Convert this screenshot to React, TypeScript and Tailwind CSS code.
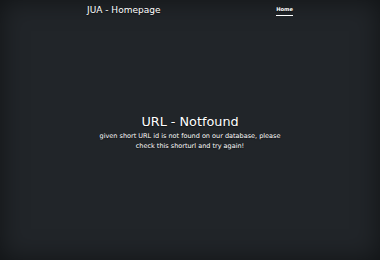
export default function App() {
  return (
    <div
      className="h-screen w-full bg-[#212529] text-white text-center shadow-[inset_0_0_26px_rgba(0,0,0,0.5)] [text-shadow:0_0.5px_1px_rgba(0,0,0,0.5)]"
      style={{ fontFamily: '"DejaVu Sans", sans-serif' }}
    >
      <div className="mx-auto flex h-full w-full max-w-[216px] flex-col p-[5px]">
        <header className="flex items-start justify-between">
          <h3 className="m-0 text-[9px] font-medium leading-[1.2]">JUA - Homepage</h3>
          <nav className="flex">
            <a className="block border-b-[1.3px] border-white py-[1.3px] text-[5.2px] font-bold leading-[1.5] text-white">
              Home
            </a>
          </nav>
        </header>
        <main className="my-auto px-[5px]">
          <h1 className="mb-[2.6px] text-[12.8px] font-medium leading-[1.2]">URL - Notfound</h1>
          <p className="mb-[5px] text-[6.5px] leading-[1.5]">
            given short URL id is not found on our database, please check this shorturl and try again!
          </p>
        </main>
      </div>
    </div>
  );
}
